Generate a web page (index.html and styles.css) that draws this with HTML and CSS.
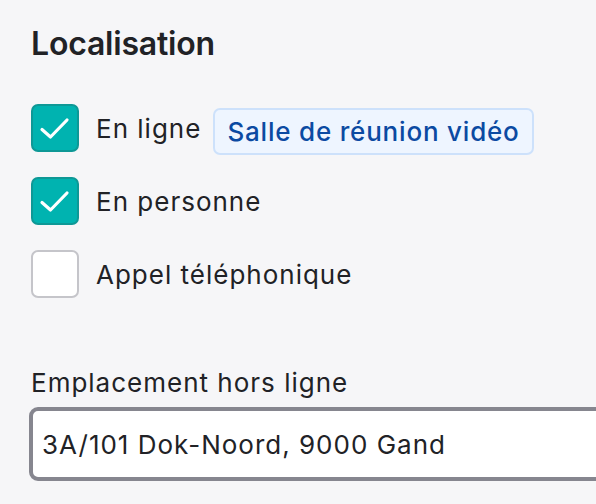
FILE: index.html
```html
<!DOCTYPE html>
<html lang="fr">
<head>
<meta charset="utf-8">
<link rel="stylesheet" href="styles.css">
</head>
<body>
<section class="panel">
  <h2 class="title">Localisation</h2>
  <div class="options">
    <label class="option">
      <span class="box checked"><svg viewBox="0 0 44 44"><path d="M9 23.5l8.5 7.5L34 14"/></svg></span>
      <span class="text">En ligne</span>
      <span class="badge">Salle de réunion vidéo</span>
    </label>
    <label class="option">
      <span class="box checked"><svg viewBox="0 0 44 44"><path d="M9 23.5l8.5 7.5L34 14"/></svg></span>
      <span class="text">En personne</span>
    </label>
    <label class="option">
      <span class="box"></span>
      <span class="text">Appel téléphonique</span>
    </label>
  </div>
  <div class="field">
    <div class="field-label">Emplacement hors ligne</div>
    <div class="input">3A/101 Dok-Noord, 9000 Gand</div>
  </div>
</section>
</body>
</html>
```
FILE: styles.css
```css
html, body {
  margin: 0;
  padding: 0;
  background: #f6f6f8;
  overflow: hidden;
}
body {
  font-family: Inter, "Noto Sans", sans-serif;
  color: #212226;
}
.panel {
  padding: 24px 0 0 31px;
}
.title {
  margin: 0;
  font-size: 32px;
  font-weight: 600;
  line-height: 40px;
  letter-spacing: -0.2px;
}
.options {
  display: flex;
  flex-direction: column;
  gap: 25px;
  margin-top: 40px;
}
.option {
  display: flex;
  align-items: center;
  height: 48px;
}
.box {
  width: 44px;
  height: 44px;
  border: 2px solid #c5c5ca;
  border-radius: 7px;
  background: #fff;
  display: flex;
  align-items: center;
  justify-content: center;
  flex: none;
}
.box.checked {
  background: #00b3b0;
  border-color: #0e9896;
}
.box svg {
  width: 44px;
  height: 44px;
  fill: none;
  stroke: #fff;
  stroke-width: 3.2;
  stroke-linecap: round;
  stroke-linejoin: round;
}
.text {
  margin-left: 17px;
  font-size: 26px;
  letter-spacing: 1px;
}
.badge {
  margin: 6px 0 0 12px;
  height: 43px;
  padding: 0 12px;
  display: flex;
  align-items: center;
  background: #eef5ff;
  border: 2px solid #cde1fb;
  border-radius: 7px;
  color: #0b4aa2;
  font-size: 26px;
  font-weight: 500;
  letter-spacing: 0.8px;
}
.field {
  margin-top: 70px;
}
.field-label {
  font-size: 26px;
  line-height: 30px;
  letter-spacing: 1px;
}
.input {
  margin: 9px 0 0 -2px;
  width: 600px;
  height: 74px;
  box-sizing: border-box;
  border: 4px solid #86868f;
  border-radius: 9px;
  background: #fff;
  padding: 0 9px;
  display: flex;
  align-items: center;
  font-size: 26px;
  letter-spacing: 1px;
}
```
